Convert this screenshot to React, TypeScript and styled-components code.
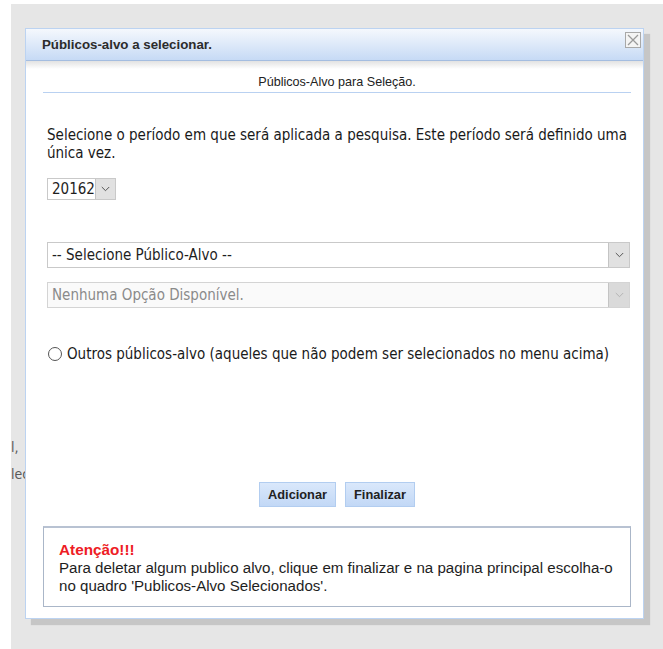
import styled, { createGlobalStyle } from 'styled-components';

const GlobalStyle = createGlobalStyle`
  html, body {
    margin: 0;
    padding: 0;
    background: #ffffff;
  }
  body {
    font-family: "DejaVu Sans Condensed", "DejaVu Sans", sans-serif;
    color: #222;
  }
`;

const Screen = styled.div`
  position: relative;
  width: 663px;
  height: 649px;
  padding: 4px 0 0 11px;
  box-sizing: border-box;
  background: #ffffff;
  overflow: hidden;
`;

const Backdrop = styled.div`
  height: 100%;
  background: #e6e6e6;
  overflow: hidden;
  padding-top: 430px;
  box-sizing: border-box;
`;

const PageLine = styled.div`
  font-size: 14px;
  line-height: 27px;
  color: #5a5a5a;
  white-space: nowrap;
`;

const Dialog = styled.div`
  position: absolute;
  left: 25px;
  top: 28px;
  width: 619px;
  height: 591px;
  box-sizing: border-box;
  border: 1px solid #bcd3f1;
  background: #ffffff;
  box-shadow: 6px 6px 1px #c6c6c6;
  display: flex;
  flex-direction: column;
`;

const Header = styled.div`
  height: 31px;
  flex-shrink: 0;
  display: flex;
  align-items: center;
  justify-content: space-between;
  padding: 0 2px 0 16px;
  background: linear-gradient(#f5f8fd, #c6daf5);
  border-bottom: 1px solid #a4bde0;
`;

const Title = styled.span`
  font-family: "Liberation Sans", Arial, sans-serif;
  font-size: 13.3px;
  font-weight: bold;
  color: #2c2c2c;
`;

const CloseButton = styled.button`
  align-self: flex-start;
  margin-top: 3px;
  width: 16px;
  height: 16px;
  padding: 0;
  border: 1px solid #a8a8a8;
  background: #f4f4f4;
  display: flex;
  align-items: center;
  justify-content: center;
`;

const Body = styled.div`
  flex: 1;
  display: flex;
  flex-direction: column;
  padding: 0 12px 11px 17px;
  background: linear-gradient(#e2e2e2, #ffffff 8px);
`;

const SubTitle = styled.div`
  padding: 14px 0 3px;
  text-align: center;
  font-family: "Liberation Sans", Arial, sans-serif;
  font-size: 12.6px;
  line-height: 14px;
  color: #222;
  border-bottom: 1px solid #b9d1f1;
`;

const Content = styled.div`
  padding: 0 2px 0 4px;
  display: flex;
  flex-direction: column;
  align-items: flex-start;
`;

const Lead = styled.p`
  margin: 33px -8px 0 0;
  font-size: 15px;
  line-height: 18px;
  color: #1a1a1a;
`;

const Select = styled.div<{ $wide?: boolean; $disabled?: boolean; $top: number }>`
  margin-top: ${(p) => p.$top}px;
  width: ${(p) => (p.$wide ? '583px' : '69px')};
  height: ${(p) => (p.$wide ? '26px' : '22px')};
  box-sizing: border-box;
  display: flex;
  border: 1px solid ${(p) => (p.$disabled ? '#d4d4d4' : '#c9c9c9')};
  background: ${(p) => (p.$disabled ? '#fafafa' : '#ffffff')};
`;

const SelectValue = styled.span<{ $disabled?: boolean }>`
  flex: 1;
  display: flex;
  align-items: center;
  padding-left: 4px;
  font-size: 15px;
  color: ${(p) => (p.$disabled ? '#8a8a8a' : '#1e1e1e')};
  white-space: nowrap;
`;

const SelectArrow = styled.span<{ $disabled?: boolean }>`
  width: 20px;
  display: flex;
  align-items: center;
  justify-content: center;
  background: ${(p) => (p.$disabled ? '#dadada' : '#e1e1e1')};
  border-left: 1px solid #c4c4c4;
  color: ${(p) => (p.$disabled ? '#b4b4b4' : '#555')};
`;

const RadioRow = styled.label`
  margin-top: 36px;
  height: 20px;
  display: flex;
  align-items: center;
  gap: 5px;
  font-size: 15px;
  color: #1a1a1a;
  white-space: nowrap;
`;

const RadioCircle = styled.span`
  width: 14px;
  height: 14px;
  margin-left: 1px;
  box-sizing: border-box;
  border: 1px solid #555;
  border-radius: 50%;
  background: #ffffff;
`;

const Actions = styled.div`
  margin-top: auto;
  display: flex;
  justify-content: center;
  gap: 9px;
`;

const ActionButton = styled.button`
  height: 25px;
  padding: 0 8px;
  font-family: "Liberation Sans", Arial, sans-serif;
  font-size: 12.8px;
  font-weight: bold;
  color: #222;
  border: 1px solid #b2cdf0;
  background: linear-gradient(#dae8fb, #c2d8f6);
`;

const Notice = styled.div`
  margin-top: 19px;
  height: 81px;
  box-sizing: border-box;
  padding: 13px 8px 0 15px;
  border: 1px solid #aab6c8;
  border-top: 2px solid #b8c2d2;
  font-family: "Liberation Sans", Arial, sans-serif;
  font-size: 15.1px;
  line-height: 18px;
  color: #1e1e1e;
`;

const NoticeTitle = styled.div`
  font-size: 15.3px;
  font-weight: bold;
  color: #ee1c25;
`;

const Chevron = () => (
  <svg width="9" height="6" viewBox="0 0 9 6" fill="none">
    <path d="M0.8 1 L4.5 4.7 L8.2 1" stroke="currentColor" strokeWidth="1" />
  </svg>
);

export default function App() {
  return (
    <>
      <GlobalStyle />
      <Screen>
        <Backdrop>
          <PageLine>l,</PageLine>
          <PageLine>lecionados</PageLine>
        </Backdrop>
        <Dialog>
          <Header>
            <Title>Públicos-alvo a selecionar.</Title>
            <CloseButton aria-label="Fechar">
              <svg width="12" height="12" viewBox="0 0 12 12">
                <path d="M1 1 L11 11 M11 1 L1 11" stroke="#9a9a9a" strokeWidth="1.3" />
              </svg>
            </CloseButton>
          </Header>
          <Body>
            <SubTitle>Públicos-Alvo para Seleção.</SubTitle>
            <Content>
              <Lead>
                Selecione o período em que será aplicada a pesquisa. Este período será definido uma
                única vez.
              </Lead>
              <Select $top={16}>
                <SelectValue>20162</SelectValue>
                <SelectArrow>
                  <Chevron />
                </SelectArrow>
              </Select>
              <Select $wide $top={42}>
                <SelectValue>-- Selecione Público-Alvo --</SelectValue>
                <SelectArrow>
                  <Chevron />
                </SelectArrow>
              </Select>
              <Select $wide $disabled $top={14}>
                <SelectValue $disabled>Nenhuma Opção Disponível.</SelectValue>
                <SelectArrow $disabled>
                  <Chevron />
                </SelectArrow>
              </Select>
              <RadioRow>
                <RadioCircle />
                Outros públicos-alvo (aqueles que não podem ser selecionados no menu acima)
              </RadioRow>
            </Content>
            <Actions>
              <ActionButton>Adicionar</ActionButton>
              <ActionButton>Finalizar</ActionButton>
            </Actions>
            <Notice>
              <NoticeTitle>Atenção!!!</NoticeTitle>
              Para deletar algum publico alvo, clique em finalizar e na pagina principal escolha-o
              no quadro 'Publicos-Alvo Selecionados'.
            </Notice>
          </Body>
        </Dialog>
      </Screen>
    </>
  );
}
